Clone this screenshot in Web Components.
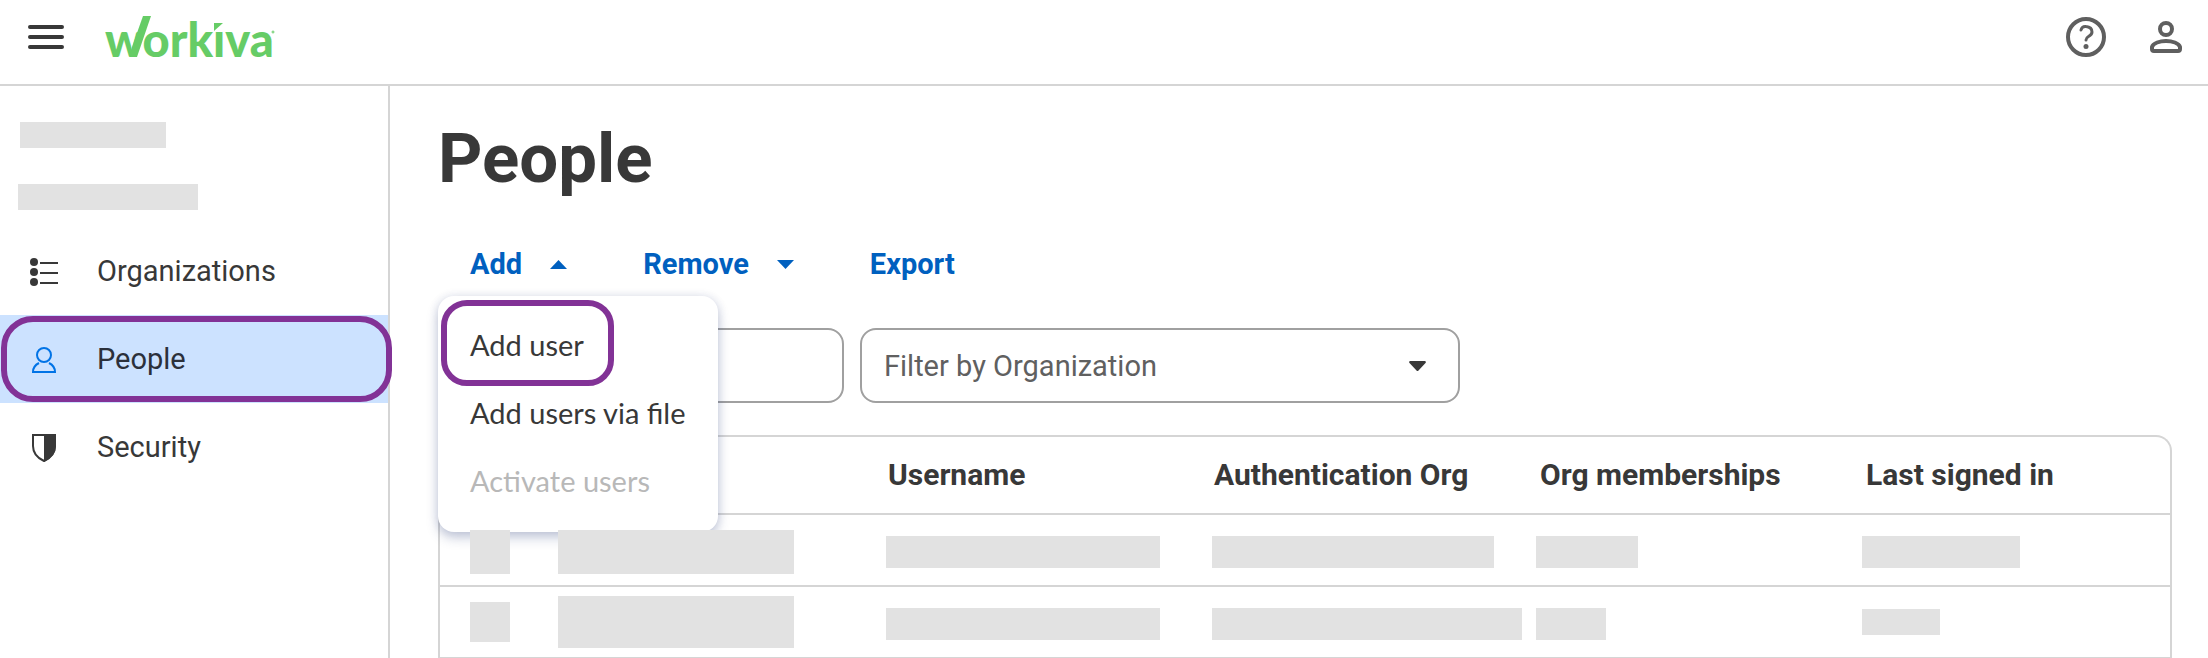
<!DOCTYPE html>
<html lang="en">
<head>
<meta charset="utf-8">
<meta name="viewport" content="width=device-width, initial-scale=1">
<title>People - Workiva</title>
<style>
  html, body { margin: 0; height: 100%; }
  body { font-family: Roboto, "Liberation Sans", sans-serif; font-size: 29px; line-height: 36px; color: #383838; background: #fff; overflow: hidden; }
</style>
</head>
<body>
<people-app></people-app>

<script>
const define = (name, html, setup) => {
  const template = document.createElement('template');
  template.innerHTML = html;
  customElements.define(name, class extends HTMLElement {
    constructor() {
      super();
      this.attachShadow({ mode: 'open' }).append(template.content.cloneNode(true));
    }
    connectedCallback() { if (setup) setup(this, this.shadowRoot); }
  });
};

// Grey bar standing in for private content.
define('redacted-bar', `
  <style>
    :host { display: block; position: relative; z-index: 3; background: #e2e2e2; width: var(--w, 100px); height: var(--h, 32px); }
  </style>`);

// Purple ring that points out a control; it lies over its host's content.
define('callout-ring', `
  <style>
    :host { display: block; position: absolute; box-sizing: border-box; height: 86px; border: 6px solid #823296; border-radius: var(--ring-radius, 26px); z-index: 4; pointer-events: none; }
  </style>`);

define('app-header', `
  <style>
    :host { display: flex; align-items: center; gap: 38px; box-sizing: border-box; height: 86px; padding: 0 24px 10px 28px; border-bottom: 2px solid #d5d5d5; color: #5f5f5f; }
    button { display: block; padding: 0; border: 0; background: none; color: inherit; }
    .menu { color: #383838; }
    .logo { flex: 1; }
    .logo a { display: inline-block; vertical-align: top; }
    svg { display: block; }
    text { font-family: Lato, sans-serif; font-weight: 900; font-size: 47px; }
  </style>
  <button class="menu" aria-label="Menu">
    <svg width="36" height="24" viewBox="0 0 36 24" stroke="currentColor" stroke-width="4" stroke-linecap="round"><path d="M2 2H34M2 12H34M2 22H34"/></svg>
  </button>
  <div class="logo"><a href="#" aria-label="Workiva home">
    <svg width="180" height="64" viewBox="0 0 180 64" fill="#66cc66">
      <text x="3" y="52">workiva</text>
      <path d="M109 14H123V27H109Z" fill="#fff"/>
      <path d="M112 18H121L112 26Z"/>
      <path d="M41 11H49L35 52H28L30 42Z"/>
      <circle cx="171" cy="27" r="1" fill="none" stroke="#66cc66"/>
    </svg></a>
  </div>
  <button aria-label="Help">
    <svg width="40" height="40" viewBox="0 0 40 40" fill="none" stroke="currentColor" stroke-linecap="round" stroke-linejoin="round"><circle cx="20" cy="20" r="18" stroke-width="4"/><path d="M15 13Q16 9 20 9.500Q26 10 26 15Q26 17.500 22.500 19.500Q20 21 20 23" stroke-width="3"/><circle cx="20" cy="29.500" r="2.500" fill="currentColor" stroke="none"/></svg>
  </button>
  <button aria-label="Account">
    <svg width="40" height="40" viewBox="0 0 40 40" fill="none" stroke="currentColor" stroke-width="4" stroke-linejoin="round"><circle cx="22" cy="12" r="6"/><path d="M8 32Q8 34 10 34H34Q36 34 36 32V30C35 26 28 24 22 24S9 26 8 30Z"/></svg>
  </button>`);

define('nav-item', `
  <style>
    :host { display: block; position: relative; }
    a { display: flex; align-items: center; gap: 39px; height: 88px; padding: 0 30px; color: inherit; text-decoration: none; }
    :host([selected]) { background: #cce2ff; color: #2b303b; }
    .icon { width: 28px; height: 30px; padding-top: 4px; flex: none; }
    callout-ring { display: none; top: 1px; left: 1px; right: -4px; --ring-radius: 32px; }
    :host([selected]) callout-ring { display: block; }
  </style>
  <a href="#"><span class="icon"><slot name="icon"></slot></span><span><slot></slot></span></a>
  <callout-ring></callout-ring>`);

define('side-nav', `
  <style>
    :host { display: flex; flex-direction: column; box-sizing: border-box; width: 390px; border-right: 2px solid #d5d5d5; }
    .account { display: flex; flex-direction: column; gap: 36px; padding: 36px 18px 17px; }
    redacted-bar { --h: 26px; }
    svg { display: block; }
  </style>
  <div class="account">
    <redacted-bar style="--w: 146px; margin-left: 2px"></redacted-bar>
    <redacted-bar style="--w: 180px"></redacted-bar>
  </div>
  <nav>
    <nav-item><svg slot="icon" width="28" height="28" viewBox="0 0 28 28" fill="#383838"><circle cx="4" cy="4" r="4"/><circle cx="4" cy="14" r="4"/><circle cx="4" cy="24" r="4"/><path d="M10 4H28V6H10ZM10 14H28V16H10ZM10 24H28V26H10Z"/></svg>Organizations</nav-item>
    <nav-item selected><svg slot="icon" width="28" height="28" viewBox="0 0 28 28" fill="none" stroke="#0073e6" stroke-width="2"><circle cx="14" cy="9" r="7"/><path d="M9 17C5 19 3 22 3 26H25C25 22 23 19 19 17"/></svg>People</nav-item>
    <nav-item><svg slot="icon" width="28" height="28" viewBox="0 0 28 28"><path d="M3 1H25V12Q25 22 14 27Q3 22 3 12Z" fill="#fff" stroke="#383838" stroke-width="2"/><path d="M14 1H26V12Q26 22 14 28Z" fill="#383838"/></svg>Security</nav-item>
  </nav>`);

define('tool-button', `
  <style>
    :host { display: block; position: relative; }
    button { display: flex; align-items: center; gap: 28px; height: 64px; padding: 0 32px; border: 0; background: none; font: inherit; font-weight: 700; color: #0060bf; white-space: nowrap; }
    svg { display: none; }
    :host([caret]) svg { display: block; }
    :host([open]) svg { transform: rotate(180deg); }
  </style>
  <button><slot></slot><svg width="17" height="9" viewBox="0 0 17 9" fill="currentColor"><path d="M0 0H17L8.500 9Z"/></svg></button>
  <slot name="menu"></slot>`,
  (host, root) => {
    if (host.hasAttribute('caret')) root.querySelector('button').setAttribute('aria-expanded', host.hasAttribute('open'));
  });

define('menu-item', `
  <style>
    :host { display: block; position: relative; }
    button { display: block; width: 100%; height: 68px; padding: 0 32px; border: 0; background: none; font: inherit; color: #383838; text-align: left; white-space: nowrap; }
    button:disabled { color: #b8b8b8; }
  </style>
  <button role="menuitem"><slot></slot></button>
  <slot name="ring"></slot>`,
  (host, root) => { root.querySelector('button').disabled = host.hasAttribute('disabled'); });

define('drop-menu', `
  <style>
    :host { display: block; position: absolute; z-index: 2; top: 100%; left: 0; box-sizing: border-box; width: 280px; padding: 15px 0 17px; border-radius: 16px; background: #fff; box-shadow: 0 6px 12px rgba(40, 60, 120, .25), 0 0 10px rgba(40, 60, 120, .12); font-family: Lato, sans-serif; }
  </style>
  <div role="menu"><slot></slot></div>`);

define('people-toolbar', `
  <style>
    :host { display: flex; gap: 12px; }
    callout-ring { top: -11px; left: 3px; width: 173px; }
  </style>
  <tool-button caret open>Add
    <drop-menu slot="menu">
      <menu-item>Add user<callout-ring slot="ring"></callout-ring></menu-item>
      <menu-item>Add users via file</menu-item>
      <menu-item disabled>Activate users</menu-item>
    </drop-menu>
  </tool-button>
  <tool-button caret>Remove</tool-button>
  <tool-button>Export</tool-button>`);

define('people-filters', `
  <style>
    :host { display: flex; gap: 16px; }
    input, select { box-sizing: border-box; width: 100%; height: 75px; margin: 0; padding: 0 22px; border: 2px solid #a0a0a0; border-radius: 16px; background: transparent; font: inherit; color: #606060; appearance: none; }
    .search { width: 406px; }
    .org { display: grid; align-items: center; width: 600px; }
    .org > * { grid-area: 1 / 1; }
    svg { justify-self: end; margin-right: 34px; pointer-events: none; }
  </style>
  <div class="search"><input type="text" aria-label="Search people"></div>
  <div class="org">
    <select aria-label="Filter by Organization"><option>Filter by Organization</option></select>
    <svg width="17" height="10" viewBox="0 0 17 10" fill="#383838"><path d="M1 0H16Q17.500 .500 16.500 2L9.500 9.500Q8.500 10.500 7.500 9.500L.500 2Q-.500 .500 1 0Z"/></svg>
  </div>`);

define('people-table', `
  <style>
    :host { display: block; border: 2px solid #d5d5d5; border-bottom: 0; border-radius: 16px 16px 0 0; }
    table { width: 100%; table-layout: fixed; border-collapse: separate; border-spacing: 0; }
    .check { width: 88px; }
    .name { width: 328px; }
    .data { width: 326px; }
    th, td { box-sizing: border-box; padding: 0 0 0 30px; border-bottom: 2px solid #d5d5d5; text-align: left; vertical-align: middle; }
    th { height: 78px; padding-left: 32px; font-size: 30px; font-weight: 700; white-space: nowrap; }
    td { height: 72px; }
    td:nth-child(n+5) { padding-left: 28px; }
    .data-cell { padding-top: 4px; }
    .first td { padding-top: 4px; }
  </style>
  <table aria-label="People">
    <colgroup><col class="check"><col class="name"><col class="data"><col class="data"><col class="data"><col></colgroup>
    <thead><tr><th></th><th></th><th>Username</th><th>Authentication Org</th><th>Org memberships</th><th>Last signed in</th></tr></thead>
    <tbody>
      <tr class="first">
        <td><redacted-bar style="--w: 40px; --h: 44px"></redacted-bar></td>
        <td><redacted-bar style="--w: 236px; --h: 44px"></redacted-bar></td>
        <td><redacted-bar style="--w: 274px"></redacted-bar></td>
        <td><redacted-bar style="--w: 282px"></redacted-bar></td>
        <td><redacted-bar style="--w: 102px"></redacted-bar></td>
        <td><redacted-bar style="--w: 158px"></redacted-bar></td>
      </tr>
      <tr>
        <td><redacted-bar style="--w: 40px; --h: 40px"></redacted-bar></td>
        <td><redacted-bar style="--w: 236px; --h: 52px"></redacted-bar></td>
        <td class="data-cell"><redacted-bar style="--w: 274px"></redacted-bar></td>
        <td class="data-cell"><redacted-bar style="--w: 310px"></redacted-bar></td>
        <td class="data-cell"><redacted-bar style="--w: 70px"></redacted-bar></td>
        <td><redacted-bar style="--w: 78px; --h: 26px"></redacted-bar></td>
      </tr>
    </tbody>
  </table>`);

define('people-app', `
  <style>
    :host { display: grid; grid-template: auto 1fr / auto 1fr; min-height: 100%; }
    app-header { grid-column: 1 / -1; }
    main { min-width: 0; padding: 32px 36px 0 48px; }
    h1 { margin: 0 0 32px; font-size: 69px; line-height: 82px; font-weight: 700; }
    people-filters, people-table { margin-top: 32px; }
  </style>
  <app-header></app-header>
  <side-nav></side-nav>
  <main>
    <h1>People</h1>
    <people-toolbar></people-toolbar>
    <people-filters></people-filters>
    <people-table></people-table>
  </main>`);
</script>
</body>
</html>
